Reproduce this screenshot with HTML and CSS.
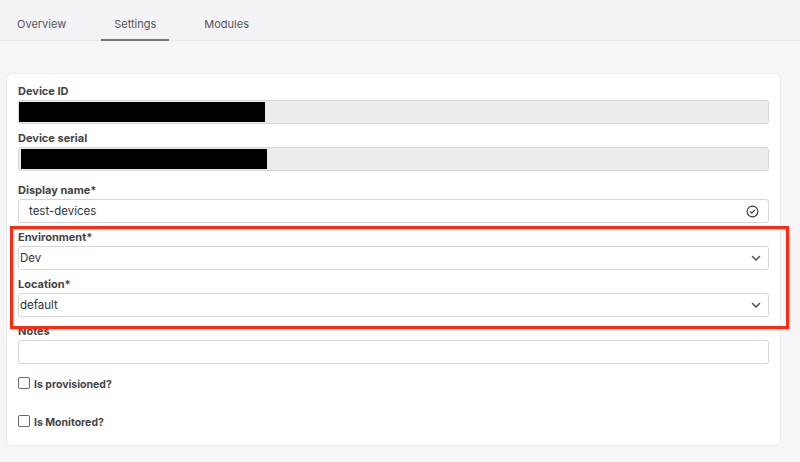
FILE: index.html
```html
<!DOCTYPE html>
<html lang="en">
<head>
  <meta charset="UTF-8">
  <meta name="viewport" content="width=device-width, initial-scale=1.0">
  <title>Device - Settings</title>
  <link rel="stylesheet" href="styles.css">
</head>
<body>
  <nav class="tabs">
    <a class="tab">Overview</a>
    <a class="tab active">Settings</a>
    <a class="tab">Modules</a>
  </nav>

  <main class="content">
    <form class="card">
      <div class="field">
        <label>Device ID</label>
        <div class="input readonly"><span class="redacted"></span></div>
      </div>

      <div class="field">
        <label>Device serial</label>
        <div class="input readonly"><span class="redacted shifted"></span></div>
      </div>

      <div class="field display-name">
        <label>Display name*</label>
        <div class="input valid">
          <span>test-devices</span>
          <svg class="check" width="13" height="13" viewBox="0 0 14 14">
            <circle cx="7" cy="7" r="5.8" fill="none" stroke="#333" stroke-width="1.2"/>
            <path d="M4.6 7.2 L6.3 8.8 L9.4 5.4" fill="none" stroke="#333" stroke-width="1.2" stroke-linecap="round" stroke-linejoin="round"/>
          </svg>
        </div>
      </div>

      <div class="field">
        <label>Environment*</label>
        <div class="input select">
          <span>Dev</span>
          <svg class="chevron" width="10" height="7" viewBox="0 0 10 7">
            <path d="M1.5 1.5 L5 5 L8.5 1.5" fill="none" stroke="#555" stroke-width="1.6" stroke-linecap="round" stroke-linejoin="round"/>
          </svg>
        </div>
      </div>

      <div class="field">
        <label>Location*</label>
        <div class="input select">
          <span>default</span>
          <svg class="chevron" width="10" height="7" viewBox="0 0 10 7">
            <path d="M1.5 1.5 L5 5 L8.5 1.5" fill="none" stroke="#555" stroke-width="1.6" stroke-linecap="round" stroke-linejoin="round"/>
          </svg>
        </div>
      </div>

      <div class="field">
        <label>Notes</label>
        <div class="input"></div>
      </div>

      <label class="checkbox first"><span class="box"></span>Is provisioned?</label>
      <label class="checkbox"><span class="box"></span>Is Monitored?</label>

      <!-- highlight drawn over the environment / location selects -->
      <div class="highlight"></div>
    </form>
  </main>
</body>
</html>
```

FILE: styles.css
```css
body {
  margin: 0;
  background: #f6f6f9;
  font-family: Inter, 'Noto Sans', sans-serif;
  color: #333;
  height: 462px;
  overflow: hidden;
}

.tabs {
  display: flex;
  gap: 22px;
  height: 40px;
  padding-left: 4px;
  background: #f3f3f7;
  border-bottom: 1px solid #e6e6ea;
}

.tab {
  display: flex;
  align-items: center;
  padding: 8px 13px 0;
  font-size: 11px;
  color: #555;
  border-bottom: 2px solid transparent;
  margin-bottom: -1px;
}

.tab.active {
  border-bottom-color: #777;
}

.content {
  padding: 32px 19px 0 6px;
}

.card {
  position: relative;
  background: #fff;
  border: 1px solid #ececf0;
  border-radius: 6px;
  padding: 9px 11px 15px 11px;
  margin: 0;
}

.field {
  display: flex;
  flex-direction: column;
  margin-bottom: 6px;
}

.field.display-name {
  margin-top: 11px;
}

.field label {
  font-size: 11px;
  font-weight: 700;
  color: #444;
  line-height: 16px;
  margin-bottom: 1px;
}

.input {
  display: flex;
  align-items: center;
  height: 24px;
  box-sizing: border-box;
  border: 1px solid #d6d6da;
  border-radius: 3px;
  padding: 0 8px 0 1px;
  font-size: 11.5px;
  color: #333;
  background: #fff;
}

.input.readonly {
  background: #ececec;
  padding: 0;
}

.redacted {
  width: 246px;
  height: 20px;
  background: #000;
}

.redacted.shifted {
  margin-left: 2px;
}

.input.valid span {
  padding-left: 9px;
  flex: 1;
}

.input.select span {
  flex: 1;
}

.check {
  margin-right: 1px;
}

.chevron {
  margin-right: -1px;
}

.checkbox {
  display: flex;
  align-items: center;
  gap: 4px;
  font-size: 10.5px;
  font-weight: 700;
  color: #444;
  height: 16px;
  margin-bottom: 22px;
}

.checkbox.first {
  margin-top: 12px;
}

.checkbox:last-of-type {
  margin-bottom: 0;
}

.box {
  width: 10px;
  height: 10px;
  border: 1px solid #666;
  border-radius: 2px;
  margin-top: -2px;
}

.highlight {
  position: absolute;
  left: 3px;
  top: 152px;
  width: 773px;
  height: 97px;
  border: 3px solid #ff2a0f;
}
```
